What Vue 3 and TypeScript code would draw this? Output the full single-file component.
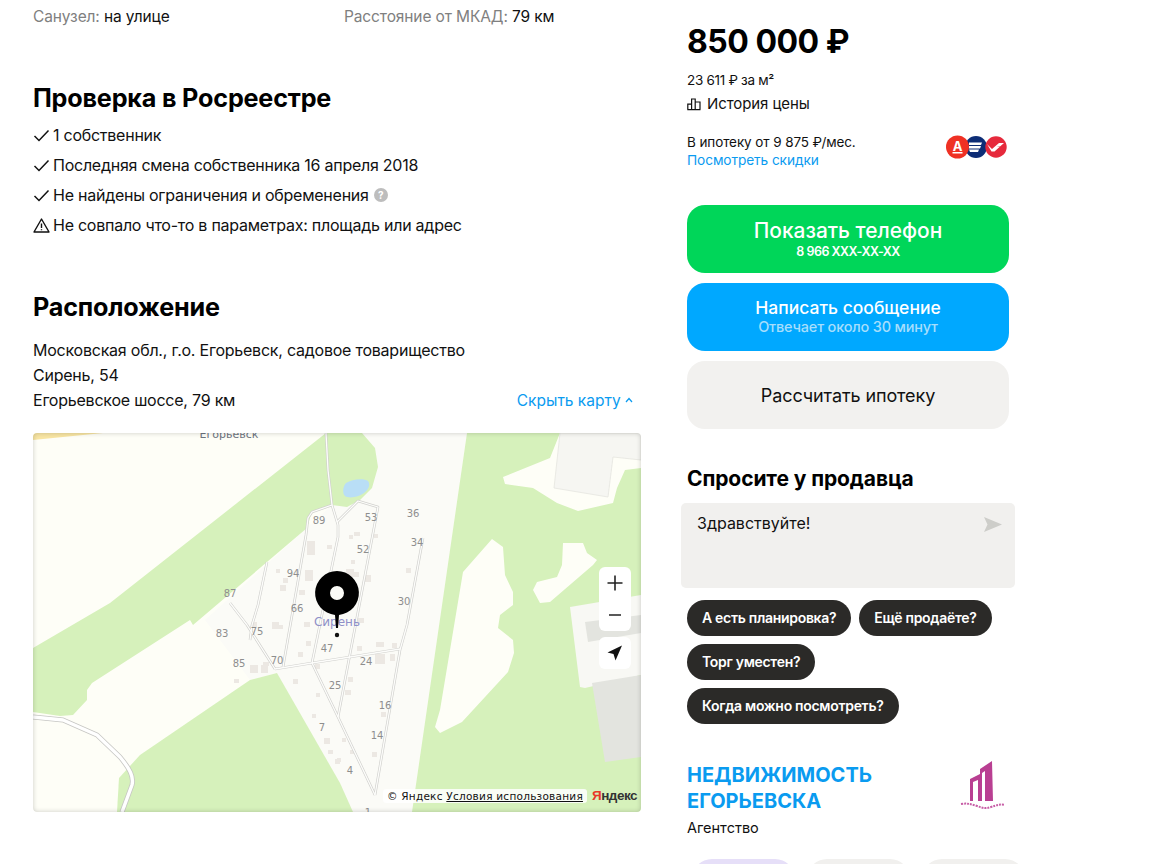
<script setup lang="ts">
type Label = { t: string; x: number; y: number }

const checks = [
  { text: '1 собственник', warn: false, hint: false },
  { text: 'Последняя смена собственника 16 апреля 2018', warn: false, hint: false },
  { text: 'Не найдены ограничения и обременения', warn: false, hint: true },
  { text: 'Не совпало что-то в параметрах: площадь или адрес', warn: true, hint: false },
]

const chipRows = [['А есть планировка?', 'Ещё продаёте?'], ['Торг уместен?'], ['Когда можно посмотреть?']]

// map is drawn in page coordinates, the svg viewBox starts at the map corner
const roads = [
  '326,433 328,470 332,505 338,525 338,537 312,663',
  '332,505 312,512 308,518 306,535 283,667',
  '337,522 358,501 378,507 338,717',
  '423,538 407,625 400,650 375,795',
  '275,669 312,663 350,657 400,649',
  '230,603 247,625 275,669',
  '267,562 258,605 252,625 250,640',
  '312,663 338,717 375,795',
]

const labels: Label[] = [
  { t: '89', x: 319, y: 524 }, { t: '53', x: 371, y: 521 }, { t: '36', x: 413, y: 517 },
  { t: '34', x: 417, y: 546 }, { t: '52', x: 363, y: 553 }, { t: '94', x: 293, y: 577 },
  { t: '66', x: 297, y: 612 }, { t: '87', x: 230, y: 597 }, { t: '30', x: 404, y: 605 },
  { t: '83', x: 222, y: 637 }, { t: '75', x: 257, y: 635 }, { t: '70', x: 277, y: 664 },
  { t: '47', x: 327, y: 652 }, { t: '85', x: 239, y: 667 }, { t: '24', x: 366, y: 665 },
  { t: '25', x: 335, y: 689 }, { t: '16', x: 385, y: 709 }, { t: '7', x: 322, y: 731 },
  { t: '14', x: 377, y: 739 }, { t: '4', x: 350, y: 774 }, { t: '1', x: 368, y: 816 },
]

// x, y, w, h
const houses = [
  [307, 541, 8, 14], [305, 570, 8, 11], [327, 545, 5, 4], [276, 569, 4, 4], [283, 578, 5, 5],
  [280, 585, 6, 6], [299, 590, 6, 5], [272, 622, 7, 7], [252, 622, 5, 5], [354, 532, 6, 4],
  [349, 535, 4, 4], [374, 534, 4, 4], [351, 560, 4, 4], [354, 572, 5, 5], [346, 569, 8, 8],
  [365, 575, 6, 7], [406, 568, 5, 5], [358, 618, 6, 5], [278, 625, 5, 4], [304, 622, 6, 5],
  [306, 641, 5, 5], [298, 652, 5, 5], [250, 665, 8, 8], [263, 662, 6, 4], [261, 665, 7, 8],
  [234, 679, 5, 4], [293, 679, 5, 5], [315, 664, 5, 5], [316, 693, 4, 4], [312, 714, 4, 4],
  [324, 738, 6, 6], [328, 750, 5, 4], [335, 759, 5, 5], [376, 642, 8, 5], [392, 643, 5, 5],
  [357, 646, 5, 5], [375, 654, 10, 10], [390, 654, 5, 7], [348, 677, 5, 5], [345, 690, 6, 5],
  [381, 712, 5, 5], [372, 752, 5, 5], [342, 738, 4, 4], [350, 750, 4, 4], [337, 758, 4, 4],
]
</script>

<template>
  <div class="page">
    <main class="left">
      <div class="facts">
        <div><span class="muted">Санузел:</span> на улице</div>
        <div><span class="muted">Расстояние от МКАД:</span> 79 км</div>
      </div>

      <h2 class="title check-title">Проверка в Росреестре</h2>
      <ul class="checks">
        <li v-for="item in checks" :key="item.text">
          <svg v-if="item.warn" width="17" height="17" viewBox="0 0 17 17" fill="none" stroke="#111" stroke-width="1.4" stroke-linejoin="round">
            <path d="M8.5 2 16 15H1z" />
            <path d="M8.5 6.5v4.5M8.5 12.2v1.1" />
          </svg>
          <svg v-else width="17" height="17" viewBox="0 0 17 17" fill="none" stroke="#111" stroke-width="1.5">
            <path d="M1.5 9l4.5 4.5L15.5 3.5" />
          </svg>
          <span>{{ item.text }}</span>
          <i v-if="item.hint" class="hint">?</i>
        </li>
      </ul>

      <h2 class="title place-title">Расположение</h2>
      <div class="place">
        <div class="address">
          Московская обл., г.о. Егорьевск, садовое товарищество Сирень, 54<br />
          Егорьевское шоссе, 79 км
        </div>
        <a class="hide-map">Скрыть карту
          <svg width="8" height="6" viewBox="0 0 8 6" fill="none" stroke="#0a9bf0" stroke-width="1.2"><path d="M1 5l3-3.5L7 5" /></svg>
        </a>
      </div>

      <div class="map">
        <svg class="map-canvas" width="608" height="379" viewBox="33 433 608 379">
          <rect x="33" y="433" width="608" height="379" fill="#fefef7" />
          <polygon points="33,433 103,433 33,440" fill="#f8e5a3" />
          <polygon points="362,433 467,433 412,812 353,812 277,673 250,680 205,620 307,528 332,505" fill="#fbfbf7" />

          <g fill="#d6f1bb">
            <polygon points="326,433 362,433 375,448 378,467 372,488 360,500 347,507 332,505 312,511 307,528 193,625 190,620 92,683 87,690 87,700 73,715 60,716 33,712 33,648 110,603" />
            <polygon points="250,680 277,673 340,783 353,812 117,812 119,778 140,755" />
            <path fill-rule="evenodd" d="M467 433H641V812H412ZM560 433 550 458 503 477 505 484 533 488 557 503 578 511 613 503 617 488 625 470 641 468 641 433ZM492 539 503 547 505 575 513 592 513 605 500 615 498 628 513 640 514 653 508 672 462 722 440 733 435 727 440 710 455 620 463 572ZM563 543 583 543 587 553 597 560 593 565 550 602 540 603 533 590 537 582 557 577 562 565Z" />
          </g>

          <polygon points="560,433 554,488 608,497 613,457 641,460 641,433" fill="#f6f6f2" stroke="#e2e2dc" stroke-width=".7" />
          <polygon points="570,607 641,595 641,675 585,688 580,687" fill="#f8f8f4" />
          <polygon points="585,622 641,615 641,633 588,642" fill="#e3e4df" />
          <polygon points="592,683 641,675 641,757 605,762" fill="#e3e4df" />
          <path d="M346 483c6-4 18-5 22-2 3 4 0 9-4 12-5 4-15 6-19 3-3-3-2-10 1-13z" fill="#b9def6" />

          <rect v-for="(h, i) in houses" :key="i" :x="h[0]" :y="h[1]" :width="h[2]" :height="h[3]" fill="#ece8e3" />

          <g fill="none" stroke-linejoin="round">
            <polyline v-for="r in roads" :key="r" :points="r" stroke="#d0d0cd" stroke-width="2.6" />
            <polyline v-for="r in roads" :key="r + 'w'" :points="r" stroke="#fdfdfb" stroke-width="1.3" />
            <path d="M33 717 63 720 97 735 120 757C130 769 134 777 132 785L122 812" stroke="#c6c6c3" stroke-width="5" />
            <path d="M33 717 63 720 97 735 120 757C130 769 134 777 132 785L122 812" stroke="#fff" stroke-width="3.4" />
          </g>

          <g class="house-nums">
            <text v-for="l in labels" :key="l.t" :x="l.x" :y="l.y" text-anchor="middle">{{ l.t }}</text>
          </g>
          <text class="town" x="229" y="438" text-anchor="middle">Егорьевск</text>
          <text class="settlement" x="337" y="626" text-anchor="middle">Сирень</text>

          <path d="M337 571a22 22 0 0 1 2 43.9L338 628h-2l-1-13.1A22 22 0 0 1 337 571zm0 15a7 7 0 1 0 0 14 7 7 0 0 0 0-14z" fill="#000" />
          <circle cx="337" cy="635" r="2.2" fill="#111" />
        </svg>

        <div class="zoom">
          <button class="ctrl">
            <svg width="16" height="16" viewBox="0 0 16 16" stroke="#222" stroke-width="1.6"><path d="M8 .5v15M.5 8h15" /></svg>
          </button>
          <button class="ctrl">
            <svg width="16" height="16" viewBox="0 0 16 16" stroke="#222" stroke-width="1.6"><path d="M2 8h12" /></svg>
          </button>
        </div>
        <button class="ctrl locate">
          <svg width="16" height="16" viewBox="0 0 16 16" fill="#111"><path d="M15 .5 .5 7.5 6.5 9 8.5 15.5z" /></svg>
        </button>

        <div class="copy">
          <span class="terms">© Яндекс <u>Условия использования</u></span>
          <span class="ya-logo"><b>Я</b>ндекс</span>
        </div>
      </div>
    </main>

    <aside class="right">
      <div class="price">850 000 ₽</div>
      <div class="per-meter">23 611 ₽ за м²</div>
      <div class="history">
        <svg width="14" height="14" viewBox="0 0 14 14" fill="none" stroke="#111" stroke-width="1.2">
          <path d="M.8 12.6V7.2h3.8v5.4M4.6 12.6V2h3.6v10.6M8.2 12.6V5h4.8v7.6M.3 12.6h13.2" />
        </svg>
        История цены
      </div>

      <div class="mortgage">
        <div class="mortgage-text">
          В ипотеку от 9 875 ₽/мес.<br />
          <a>Посмотреть скидки</a>
        </div>
        <svg class="banks" width="62" height="24" viewBox="0 0 62 24">
          <circle cx="30" cy="12" r="11" fill="#0d2d76" />
          <path d="M23 7.5h13l-1 2.4H23zM23 11h12l-1 2.4H23zM23 14.5h10l-1 2.4H24z" fill="#fff" />
          <circle cx="50" cy="12" r="10.7" fill="#e62a3c" />
          <path d="M41 9l5 5 7-6h5l-4 3.5h-3.5l3 .5-5 4.5h-3z" fill="#fff" />
          <circle cx="11.5" cy="12" r="11.5" fill="#ef3124" />
          <text x="11.5" y="15.6" text-anchor="middle" class="alfa">А</text>
          <rect x="6.5" y="17" width="10" height="1.5" fill="#fff" />
        </svg>
      </div>

      <button class="btn green">
        <span class="btn-main">Показать телефон</span>
        <span class="btn-sub">8 966 ХХХ-ХХ-ХХ</span>
      </button>
      <button class="btn blue">
        <span class="btn-main small">Написать сообщение</span>
        <span class="btn-sub pale">Отвечает около 30 минут</span>
      </button>
      <button class="btn grey">Рассчитать ипотеку</button>

      <h3 class="ask">Спросите у продавца</h3>
      <div class="ask-box">
        <span>Здравствуйте!</span>
        <svg width="18" height="15" viewBox="0 0 18 15" fill="#cdcdc9"><path d="M0 0l18 7.5L0 15l3.5-7.5z" /></svg>
      </div>
      <div class="chips">
        <div v-for="(row, i) in chipRows" :key="i" class="chip-row">
          <span v-for="c in row" :key="c" class="chip">{{ c }}</span>
        </div>
      </div>

      <div class="agency">
        <div>
          <div class="agency-name">НЕДВИЖИМОСТЬ ЕГОРЬЕВСКА</div>
          <div class="agency-type">Агентство</div>
        </div>
        <svg class="agency-logo" width="48" height="54" viewBox="0 0 48 54">
          <path d="M34 2 22 10v5l-10 5v22h3V23l5-2v21h4V14l3-2v30h8z" fill="#b93f92" />
          <path d="M3 45c6-1 10 0 16 2 6 2 8 3 14 1 6-2 9-3 14-2" fill="none" stroke="#c75ea6" stroke-width="2" stroke-dasharray="2 1" />
        </svg>
      </div>

      <div class="tabs">
        <span class="tab violet"></span>
        <span class="tab"></span>
        <span class="tab"></span>
      </div>
    </aside>
  </div>
</template>

<style>
html,
body {
  margin: 0;
  overflow: hidden;
  background: #fff;
}
</style>

<style scoped>
.page {
  width: 1164px;
  height: 864px;
  overflow: hidden;
  display: flex;
  font-family: Inter, "Noto Sans", sans-serif;
  color: #111;
}

.left {
  width: 608px;
  margin-left: 33px;
  flex-shrink: 0;
}

.facts {
  display: grid;
  grid-template-columns: 311px 1fr;
  padding-top: 7px;
  font-size: 15.5px;
  line-height: 19px;
  letter-spacing: -0.12px;
}

.muted {
  color: #808080;
}

.title {
  margin: 0;
  font-size: 25.2px;
  line-height: 32px;
  font-weight: 700;
  letter-spacing: -0.2px;
  color: #000;
}

.check-title {
  margin-top: 56px;
}

.checks {
  list-style: none;
  margin: 6px 0 0;
  padding: 0;
  font-size: 16px;
  letter-spacing: -0.25px;
}

.checks li {
  display: flex;
  align-items: center;
  gap: 3px;
  height: 30px;
}

.hint {
  width: 14px;
  height: 14px;
  margin-left: 2px;
  border-radius: 50%;
  background: #bdbdbd;
  color: #fff;
  font-size: 10px;
  font-style: normal;
  font-weight: 700;
  line-height: 14px;
  text-align: center;
}

.place-title {
  margin-top: 51px;
}

.place {
  display: flex;
  justify-content: space-between;
  align-items: flex-end;
  margin-top: 15px;
  padding-right: 8px;
  font-size: 16px;
  line-height: 25px;
  letter-spacing: -0.23px;
}

.address {
  width: 445px;
}

.hide-map {
  color: #0a9bf0;
  font-size: 15.5px;
  letter-spacing: 0;
}

.hide-map svg {
  vertical-align: 3px;
}

.map {
  position: relative;
  width: 608px;
  height: 379px;
  margin-top: 20px;
  border-radius: 4px;
  overflow: hidden;
}

.map::after {
  content: "";
  position: absolute;
  inset: 0;
  border-radius: 4px;
  box-shadow: inset 0 0 5px rgba(0, 0, 0, 0.2);
  pointer-events: none;
}

.map-canvas {
  display: block;
}

.house-nums text {
  font-family: "DejaVu Sans", sans-serif;
  font-size: 10px;
  fill: #8e8e8e;
}

.town {
  font-family: "DejaVu Sans", sans-serif;
  font-size: 11px;
  fill: #6d7480;
}

.settlement {
  font-family: "DejaVu Sans", sans-serif;
  font-size: 12px;
  fill: #8f90c8;
}

.ctrl {
  display: flex;
  align-items: center;
  justify-content: center;
  width: 32px;
  height: 32px;
  padding: 0;
  border: 0;
  background: #fff;
}

.zoom {
  position: absolute;
  left: 566px;
  top: 134px;
  border-radius: 6px;
  overflow: hidden;
}

.locate {
  position: absolute;
  left: 566px;
  top: 204px;
  border-radius: 6px;
}

.copy {
  position: absolute;
  right: 4px;
  bottom: 9px;
  display: flex;
  align-items: center;
  gap: 5px;
  font-family: "DejaVu Sans", sans-serif;
  font-size: 10.5px;
  color: #111;
}

.terms {
  padding: 0 4px;
  line-height: 14px;
  background: rgba(255, 255, 255, 0.85);
  border-radius: 3px;
  letter-spacing: 0.25px;
  white-space: nowrap;
}

.ya-logo {
  font-family: "Liberation Sans", sans-serif;
  font-size: 13.5px;
  font-weight: 700;
  letter-spacing: -0.5px;
  color: #333;
}

.ya-logo b {
  color: #e8392a;
}

.right {
  width: 322px;
  margin-left: 46px;
  flex-shrink: 0;
}

.price {
  padding-top: 22px;
  font-size: 32px;
  line-height: 40px;
  font-weight: 700;
  letter-spacing: -0.5px;
  color: #000;
}

.per-meter {
  margin-top: 9px;
  font-size: 13.5px;
  line-height: 18px;
  letter-spacing: -0.3px;
}

.history {
  display: flex;
  align-items: center;
  gap: 6px;
  margin-top: 6px;
  font-size: 15px;
  line-height: 18px;
  letter-spacing: -0.1px;
}

.mortgage {
  display: flex;
  justify-content: space-between;
  align-items: center;
  margin-top: 20px;
  font-size: 13.5px;
  line-height: 18px;
  letter-spacing: -0.1px;
}

.mortgage a {
  color: #0a9bf0;
  font-size: 13.7px;
}

.banks {
  display: block;
  margin: 0 1px 8px 0;
}

.alfa {
  font-family: Inter, sans-serif;
  font-size: 13px;
  font-weight: 700;
  fill: #fff;
}

.btn {
  display: flex;
  flex-direction: column;
  align-items: center;
  justify-content: center;
  width: 322px;
  height: 68px;
  margin-bottom: 10px;
  padding: 0;
  border: 0;
  border-radius: 18px;
  font-family: inherit;
  color: #fff;
}

.green {
  margin-top: 36px;
  padding-top: 2px;
  background: #00d659;
}

.blue {
  background: #00a8ff;
}

.grey {
  margin-bottom: 0;
  background: #f2f1ef;
  color: #111;
  font-size: 18px;
  letter-spacing: -0.1px;
}

.btn-main {
  font-size: 20.9px;
  line-height: 24px;
  font-weight: 500;
}

.btn-main.small {
  font-size: 17.5px;
  line-height: 20px;
}

.btn-sub {
  font-size: 12.5px;
  line-height: 18px;
  font-weight: 600;
  letter-spacing: -0.5px;
}

.pale {
  color: #a6defc;
  font-size: 14.5px;
  font-weight: 500;
  letter-spacing: -0.2px;
}

.ask {
  margin: 35px 0 0;
  font-size: 21px;
  line-height: 30px;
  font-weight: 700;
  color: #000;
  letter-spacing: -0.1px;
}

.ask-box {
  display: flex;
  justify-content: space-between;
  height: 85px;
  margin: 9px -6px 0;
  padding: 10px 13px 0 16px;
  box-sizing: border-box;
  background: #f1f0ee;
  border-radius: 5px;
  font-size: 16px;
  line-height: 20px;
}

.ask-box svg {
  margin-top: 4px;
}

.chips {
  display: flex;
  flex-direction: column;
  gap: 8px;
  margin-top: 12px;
}

.chip-row {
  display: flex;
  gap: 8px;
}

.chip {
  height: 36px;
  padding: 0 15px;
  border-radius: 18px;
  background: #2b2a28;
  color: #fff;
  font-size: 14px;
  font-weight: 600;
  line-height: 36px;
  letter-spacing: -0.3px;
  white-space: nowrap;
}

.agency {
  display: flex;
  justify-content: space-between;
  margin-top: 38px;
}

.agency-name {
  width: 230px;
  font-size: 20px;
  line-height: 26px;
  font-weight: 700;
  color: #0a9bf0;
}

.agency-type {
  margin-top: 3px;
  font-size: 14.5px;
  line-height: 22px;
}

.agency-logo {
  margin: -3px 3px 0 0;
}

.tabs {
  display: flex;
  gap: 12px;
  width: 322px;
  margin-top: 20px;
  padding-left: 5px;
  box-sizing: border-box;
}

.tab {
  flex: 0 0 103px;
  height: 40px;
  border-radius: 20px;
  background: #f1f0ee;
}

.violet {
  background: #e6dff8;
}
</style>
